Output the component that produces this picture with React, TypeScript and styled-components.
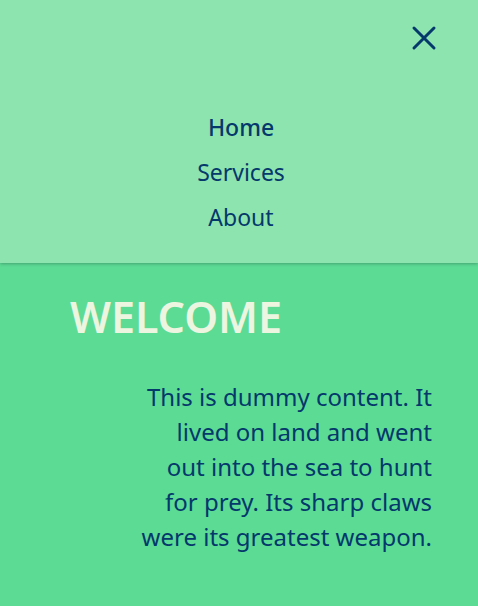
import React from "react";
import styled, { createGlobalStyle } from "styled-components";

const Global = createGlobalStyle`
  html, body { margin: 0; padding: 0; }
  body {
    background: #5cdb95;
    font-family: "Noto Sans", "Open Sans", sans-serif;
    min-height: 606px;
  }
`;

const Header = styled.header`
  position: relative;
  z-index: 1;
  height: 263px;
  background: #8ee4af;
  box-shadow: 0 1px 3px rgba(0, 0, 0, 0.25);
  display: flex;
  flex-direction: column;
`;

const TopBar = styled.div`
  display: flex;
  justify-content: flex-end;
  padding: 23px 39px 0 0;
`;

const CloseButton = styled.button`
  background: none;
  border: none;
  padding: 0;
  width: 30px;
  height: 30px;
  color: #05386b;
  cursor: pointer;
  display: flex;
  align-items: center;
  justify-content: center;
`;

const Nav = styled.nav`
  display: flex;
  flex-direction: column;
  align-items: center;
  margin-top: 52px;
  padding-left: 4px;
`;

const NavLink = styled.a<{ $active?: boolean }>`
  font-size: 23px;
  line-height: 45px;
  color: #05386b;
  text-decoration: none;
  font-weight: ${(p) => (p.$active ? 500 : 400)};
`;

const Main = styled.main`
  display: flex;
  flex-direction: column;
  padding: 0 46px 0 70px;
`;

const Title = styled.h1`
  margin: 26px 0 0;
  font-size: 43px;
  font-weight: 600;
  line-height: 56px;
  color: #edf5e1;
`;

const Text = styled.p`
  margin: 34px 0 0 auto;
  max-width: 292px;
  text-align: right;
  font-size: 24px;
  line-height: 35px;
  color: #05386b;
`;

export default function App() {
  return (
    <>
      <Global />
      <Header>
        <TopBar>
          <CloseButton aria-label="Close">
            <svg width="26" height="26" viewBox="0 0 26 26" fill="none">
              <path d="M3 3 L23 23 M23 3 L3 23" stroke="currentColor" strokeWidth="3" strokeLinecap="round" />
            </svg>
          </CloseButton>
        </TopBar>
        <Nav>
          <NavLink href="#" $active>Home</NavLink>
          <NavLink href="#">Services</NavLink>
          <NavLink href="#">About</NavLink>
        </Nav>
      </Header>
      <Main>
        <Title>WELCOME</Title>
        <Text>
          This is dummy content. It lived on land and went out into the sea to hunt for prey. Its sharp claws were its greatest weapon.
        </Text>
      </Main>
    </>
  );
}
